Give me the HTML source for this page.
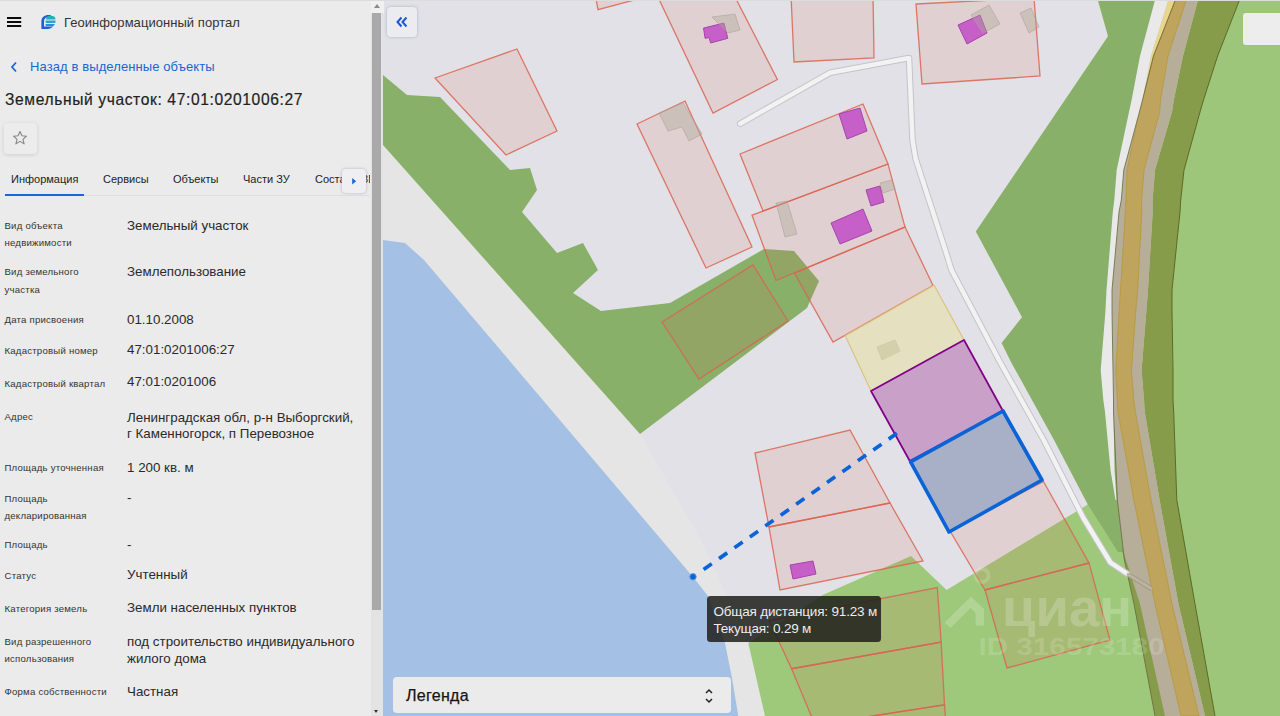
<!DOCTYPE html>
<html lang="ru"><head><meta charset="utf-8"><title>Геоинформационный портал</title>
<style>
*{box-sizing:border-box;margin:0;padding:0}
html,body{width:1280px;height:716px;overflow:hidden;background:#ebebeb;-webkit-font-smoothing:antialiased;font-family:"Liberation Sans",sans-serif;color:#2a2a2a}
.map{position:absolute;left:0;top:0}
.panel{position:absolute;left:0;top:0;width:370px;height:716px;background:#ebebeb;overflow:hidden}
.sb{position:absolute;left:370.5px;top:0;width:12.5px;height:716px;background:#e3e3e3}
.sb .th{position:absolute;left:1px;top:13px;width:9.5px;height:597px;background:#a9a9a9}
.sb .up{position:absolute;left:3px;top:4px;width:0;height:0;border:3px solid transparent;border-bottom:4px solid #8a8a8a;border-top:0}
.sb .dn{position:absolute;left:3.2px;top:710px;width:0;height:0;border:2.6px solid transparent;border-top:3.4px solid #333;border-bottom:0}
.topline{position:absolute;left:0;top:0;width:1280px;height:1px;background:#dcdcdc}
.abs{position:absolute;white-space:nowrap}
.row{position:absolute;left:0;width:370px}
.lb{position:absolute;left:4.5px;font-size:9.6px;letter-spacing:0.22px;line-height:16px;color:#333;white-space:nowrap}
.vl{position:absolute;left:127px;font-size:13.35px;line-height:17px;color:#2a2a2a;white-space:nowrap}
.tab{position:absolute;top:173px;font-size:11px;color:#222;white-space:nowrap}
.btn{position:absolute;background:#ececf0;border-radius:4px;box-shadow:0 0 3px rgba(120,130,170,.55)}
</style></head><body>
<svg class="map" width="1280" height="716" viewBox="0 0 1280 716">
<rect x="383" y="0" width="897" height="716" fill="#e1e1e7"/>
<polygon fill="#e5e5e6" points="383,140 640,434 701,540 749,643 770,716 383,716"/>
<polygon fill="#a4c0e4" points="383,240 405,243 424,260 693,577 708,596 725,643 732,678 738.3,716 383,716"/>
<polygon fill="#88b068" points="383,75 407,95 440,97 510,170 530,168 537,190 522,212 557,253 583,243 598,270 573,293 601,311 670,303 764,249 794,251 819,281 807,308 640,434 383,145"/>
<polygon fill="#9ec87a" points="765,716 748.3,643 822.7,595 911,556 946.6,590 1087,505 1100,480 1135,480 1140,620 1160,716"/>
<polygon fill="#88b068" points="1097.8,0 1108,36.3 975.8,231.5 1022,317.2 1001.6,343 1011,362 1054,440 1087,503 1118,552 1124,552 1130,500 1130,0"/>
<polygon fill="#88b068" points="1168.3,0 1151,56 1142.5,100 1139.4,112 1123.8,170 1121.3,200 1119,212 1112,290 1112,312 1113,370 1113.5,400 1113.5,412 1117.4,500 1112,500 1112,0"/>
<polygon fill="#9ec67a" points="1239.5,0 1217.6,56 1203.5,100 1200,112 1184,170 1180.7,200 1180,212 1172,290 1172,312 1173,370 1173,400 1173.7,412 1176.8,500 1195,604 1215,716 1280,716 1280,0"/>
<polygon fill="#b6ae98" points="1168.3,0 1151,56 1142.5,100 1139.4,112 1123.8,170 1121.3,200 1119,212 1112,290 1112,312 1113,370 1113.5,400 1113.5,412 1117.4,500 1124.4,560 1134,604 1155,716 1205,716 1178.5,604 1159.6,500 1144.8,412 1144,400 1141.6,370 1146.3,312 1148,290 1152.7,212 1152.6,200 1155,170 1172,112 1173.8,100 1183,56 1198,0"/>
<polygon fill="#ead68a" points="1168.3,0 1151,56 1142.5,100 1142.5,100 1153.5,56 1175.4,0"/>
<polygon fill="#bea45c" stroke="#b89838" stroke-width="0.8" points="1175.4,0 1153.5,56 1142.5,100 1139.4,112 1127,170 1126,200 1125.3,212 1120.5,290 1119,312 1115.8,370 1117.4,400 1118,412 1133.8,500 1155,604 1181,716 1199,716 1172,604 1151,500 1135.4,412 1133.8,400 1131.5,370 1135.7,312 1137.7,290 1141.8,212 1141.6,200 1144,170 1159.7,112 1160.5,100 1168,56 1186.3,0"/>
<polygon fill="#869c4a" points="1198,0 1183,56 1173.8,100 1172,112 1155,170 1152.6,200 1152.7,212 1148,290 1146.3,312 1141.6,370 1144,400 1144.8,412 1159.6,500 1178.5,604 1205,716 1215,716 1195,604 1176.8,500 1173.7,412 1173,400 1173,370 1172,312 1172,290 1180,212 1180.7,200 1184,170 1200,112 1203.5,100 1217.6,56 1239.5,0"/>
<polyline fill="none" stroke="#5a6a20" stroke-width="1" points="1239.5,0 1217.6,56 1203.5,100 1200,112 1184,170 1180.7,200 1180,212 1172,290 1172,312 1173,370 1173,400 1173.7,412 1176.8,500 1195,604 1215,716"/>
<polygon fill="#869c4a" points="1121,545 1134,604 1155,716 1165,716 1140,604 1126,560"/>
<polygon fill="#e9e9ea" points="1155,0 1140,56 1131.6,100 1129,112 1116.7,170 1114.3,200 1112.8,212 1106.5,290 1105.4,312 1100.7,370 1103.3,400 1105,412 1110.5,470 1115.5,500 1116.5,500 1114.5,470 1113.5,412 1113.5,400 1113,370 1112,312 1112,290 1119,212 1121.3,200 1123.8,170 1139.4,112 1142.5,100 1151,56 1168.3,0"/>
<polyline fill="none" stroke="#6a6a40" stroke-width="0.8" points="1175.4,0 1153.5,56 1142.5,100 1139.4,112 1123.8,170 1121.3,200 1119,212 1112,290 1112,312 1113,370 1113.5,400 1113.5,412 1117.4,500 1124.4,560 1134,604 1155,716"/>
<polyline fill="none" stroke="#c4c4c8" stroke-width="6.5" stroke-linejoin="round" stroke-linecap="round" points="740.2,123.7 830,72.8 909,58 912.5,140 915.6,158.8 945.3,250 951.6,270.3 1000,362 1043.7,440 1083.4,518 1110.4,562.5 1127.6,574"/>
<polyline fill="none" stroke="#f2f2f3" stroke-width="4.5" stroke-linejoin="round" stroke-linecap="round" points="740.2,123.7 830,72.8 909,58 912.5,140 915.6,158.8 945.3,250 951.6,270.3 1000,362 1043.7,440 1083.4,518 1110.4,562.5 1127.6,574"/>
<polyline fill="none" stroke="#9c9684" stroke-width="4.4" points="1128,574.3 1152,589"/>
<polyline fill="none" stroke="#bcb4a0" stroke-width="2.8" points="1127,573.7 1152,589"/>
<polygon fill="#dc6048" fill-opacity="0.135" stroke="#dc6450" stroke-opacity="0.85" stroke-width="1.3" points="435,78 517,49 557,131 506,155"/>
<polygon fill="#dc6048" fill-opacity="0.135" stroke="#dc6450" stroke-opacity="0.85" stroke-width="1.3" points="595.3,-5 598,9.7 638,-1"/>
<polygon fill="#dc6048" fill-opacity="0.135" stroke="#dc6450" stroke-opacity="0.85" stroke-width="1.3" points="657,-5 734,-5 777.4,79.5 713,113"/>
<polygon fill="#dc6048" fill-opacity="0.135" stroke="#dc6450" stroke-opacity="0.85" stroke-width="1.3" points="791,-5 794,62 874,58 873,-5"/>
<polygon fill="#dc6048" fill-opacity="0.135" stroke="#dc6450" stroke-opacity="0.85" stroke-width="1.3" points="637,124 685,101 752,247 706,268"/>
<polygon fill="#dc6048" fill-opacity="0.135" stroke="#dc6450" stroke-opacity="0.85" stroke-width="1.3" points="916,4 1034,-2 1040,76 922,84"/>
<polygon fill="#dc6048" fill-opacity="0.135" stroke="#dc6450" stroke-opacity="0.85" stroke-width="1.3" points="740,154 863,104 888,164 763,211"/>
<polygon fill="#dc6048" fill-opacity="0.135" stroke="#dc6450" stroke-opacity="0.85" stroke-width="1.3" points="752,215.2 888,164 905,227 776,280.5"/>
<polygon fill="#dc6048" fill-opacity="0.135" stroke="#dc6450" stroke-opacity="0.85" stroke-width="1.3" points="794.4,273.1 905,227 933,285.5 833,342"/>
<polygon fill="#dc6048" fill-opacity="0.135" stroke="#dc6450" stroke-opacity="0.85" stroke-width="1.3" points="755,453 850,430 890,503 769,527"/>
<polygon fill="#dc6048" fill-opacity="0.135" stroke="#dc6450" stroke-opacity="0.85" stroke-width="1.3" points="769,527 890,503 923,561 780,590"/>
<polygon fill="#dc6048" fill-opacity="0.135" stroke="#dc6450" stroke-opacity="0.85" stroke-width="1.3" points="950,531 1043.5,481.5 1089,563 985,590"/>
<polygon fill="#dc6048" fill-opacity="0.135" stroke="#dc6450" stroke-opacity="0.85" stroke-width="1.3" points="985,590 1089,563 1110,640 1007,668"/>
<polygon fill="#dc6048" fill-opacity="0.135" stroke="#dc6450" stroke-opacity="0.85" stroke-width="1.3" points="662,322 753,265 788,321 699,379"/>
<polygon fill="#dc6048" fill-opacity="0.135" stroke="#dc6450" stroke-opacity="0.85" stroke-width="1.3" points="769.2,620.6 937.3,587.5 941.1,642.1 791.6,668.75"/>
<polygon fill="#dc6048" fill-opacity="0.135" stroke="#dc6450" stroke-opacity="0.85" stroke-width="1.3" points="791.6,668.75 941.1,642.1 944.5,704.8 815,724.9"/>
<polygon fill="#dc6048" fill-opacity="0.135" stroke="#dc6450" stroke-opacity="0.85" stroke-width="1.3" points="815,724.9 944.5,704.8 947,740 820,740"/>
<polygon fill="#e4e0c0" stroke="#dcc47c" stroke-width="1.2" points="845.3,335.7 934.2,285.2 964,340 871,391"/>
<polygon fill="#d4d0ac" stroke="#cccaa8" stroke-width="0.8" points="877,347 895,340 900,351 882,360"/>
<polygon fill="#c452c6" fill-opacity="0.9" stroke="#a644ac" stroke-width="1" stroke-linejoin="round" points="703.5,28.1 723.9,23.1 727.8,38.3 710.6,43 709,37.5 705.1,38.3"/>
<polygon fill="#c452c6" fill-opacity="0.9" stroke="#a644ac" stroke-width="1" stroke-linejoin="round" points="958,25 980,15 987,33 967,44"/>
<polygon fill="#c452c6" fill-opacity="0.9" stroke="#a644ac" stroke-width="1" stroke-linejoin="round" points="839,114 860,108 867,131 847,139"/>
<polygon fill="#c452c6" fill-opacity="0.9" stroke="#a644ac" stroke-width="1" stroke-linejoin="round" points="866,190 880,186 884,202 871,206"/>
<polygon fill="#c452c6" fill-opacity="0.9" stroke="#a644ac" stroke-width="1" stroke-linejoin="round" points="831,223 863,209 872,231 840,244"/>
<polygon fill="#c452c6" fill-opacity="0.9" stroke="#a644ac" stroke-width="1" stroke-linejoin="round" points="790,565 813,561 816,574 793,579"/>
<polygon fill="#b0a898" fill-opacity="0.4" stroke="#a8a090" stroke-opacity="0.6" stroke-width="0.9" points="712,17 735,14 740,30 728,33"/>
<polygon fill="#b0a898" fill-opacity="0.4" stroke="#a8a090" stroke-opacity="0.6" stroke-width="0.9" points="971,15 989,5 1000,24 983,33"/>
<polygon fill="#b0a898" fill-opacity="0.4" stroke="#a8a090" stroke-opacity="0.6" stroke-width="0.9" points="1020,13 1031,8 1039,27 1029,33"/>
<polygon fill="#b0a898" fill-opacity="0.4" stroke="#a8a090" stroke-opacity="0.6" stroke-width="0.9" points="880,183 892,180 895,189 883,193"/>
<polygon fill="#b0a898" fill-opacity="0.4" stroke="#a8a090" stroke-opacity="0.6" stroke-width="0.9" points="776,203 787,201 797,234 785,237"/>
<polygon fill="#b0a898" fill-opacity="0.4" stroke="#a8a090" stroke-opacity="0.6" stroke-width="0.9" points="659,113 683,103 702,134 689,141 682,127 668,131"/>
<polygon fill="#c8a0c8" stroke="#800088" stroke-width="1.75" stroke-linejoin="round" points="871,391 964,340 1003,411 909.8,461"/>
<polygon fill="#a8b0c8" stroke="#0a64d8" stroke-width="3.6" stroke-linejoin="round" points="910.6,461.8 1003,411 1042,480 949,532"/>
<line x1="703.6" y1="569.5" x2="897" y2="433.3" stroke="#0a64d8" stroke-width="3.7" stroke-dasharray="10,8.87"/>
<circle cx="693" cy="576.8" r="3.2" fill="#0a64d8" stroke="#5a9ae8" stroke-width="1"/>
<g fill="#fff" fill-opacity="0.2">
<path d="M944.5,622.5 L971,596.5 L984,609 L984,625.5 L975.5,625.5 L975.5,613 L970.5,608 L950.5,628 Z"/>
<circle cx="982" cy="575.5" r="6.5" fill="none" stroke="#fff" stroke-opacity="0.16" stroke-width="4"/>
<text x="1002" y="626.3" font-family="Liberation Sans, sans-serif" font-weight="700" font-size="54.5" textLength="130" lengthAdjust="spacingAndGlyphs">циан</text>
<text x="978.5" y="654.5" fill-opacity="0.16" font-family="Liberation Sans, sans-serif" font-weight="700" font-size="23" textLength="186" lengthAdjust="spacingAndGlyphs">ID 316573180</text>
</g>
</svg>
<div class="panel">
 <svg class="abs" style="left:7px;top:15px" width="15" height="14" viewBox="0 0 15 14"><path d="M0,3h14.2M0,7h14.2M0,11h14.2" stroke="#0a0a0a" stroke-width="1.85"/></svg>
 <svg class="abs" style="left:40px;top:14px" width="17" height="16" viewBox="40 14 17 16"><path d="M41.4,28.9 L41.4,21.5 C41.4,17.2 44.4,14.9 48.5,14.9 L51,14.9 L50,17 L48.6,17 C45.8,17 44,18.6 44,21.6 L44,26.6 L49.5,26.6 C51,26.6 52.4,26.3 53.4,25.4 C52.3,27.7 50.2,28.9 47.5,28.9 Z" fill="#1c62c8"/><path d="M47.2,16.4 C49.5,15.6 52.5,15.6 54.6,16.8 C55.1,17.6 55.4,18.5 55.5,19.4 L46,19.4 C46.2,18.2 46.5,17 47.2,16.4Z" fill="#22b0b8"/><path d="M45.6,20.4 L55.6,20.4 C55.6,21.3 55.5,22.2 55.2,23 L45.6,23Z" fill="#2aa4d8"/><path d="M45.6,24 L54.8,24 C54.4,24.9 53.9,25.5 53.3,26 L45.6,26Z" fill="#2a8ee0"/></svg>
 <div class="abs" style="left:64px;top:14.8px;font-size:13px;letter-spacing:0.05px;color:#333">Геоинформационный портал</div>
 <svg class="abs" style="left:10px;top:60.5px" width="8" height="12" viewBox="0 0 8 12"><path d="M6,1.5 L2,6 L6,10.5" fill="none" stroke="#1a66d2" stroke-width="1.8"/></svg>
 <div class="abs" style="left:30px;top:58.5px;font-size:13px;letter-spacing:0.1px;color:#1a66d2">Назад в выделенные объекты</div>
 <div class="abs" style="left:5px;top:90.5px;font-size:15.6px;letter-spacing:0.62px;color:#222;-webkit-text-stroke:0.18px #222">Земельный участок: 47:01:0201006:27</div>
 <div class="btn" style="left:4.4px;top:122.5px;width:32.4px;height:31px;background:#ececec;box-shadow:0 1px 4px rgba(0,0,0,.13)"><svg width="32" height="31" viewBox="0 1 32 31"><path d="M16,9.5 l1.9,4.3 4.6,.4 -3.5,3.1 1.1,4.6 -4.1,-2.5 -4.1,2.5 1.1,-4.6 -3.5,-3.1 4.6,-.4z" fill="none" stroke="#858585" stroke-width="1.1" stroke-linejoin="round"/></svg></div>
 <div class="tab" style="left:11px">Информация</div>
 <div class="tab" style="left:103px">Сервисы</div>
 <div class="tab" style="left:173px">Объекты</div>
 <div class="tab" style="left:243px">Части ЗУ</div>
 <div class="tab" style="left:315px">Состав ЕЗП</div>
 <div class="abs" style="left:5px;top:195.3px;width:365px;height:1px;background:#dfdfdf"></div>
 <div class="abs" style="left:5px;top:194px;width:79px;height:2px;background:#1a66d2"></div>
 <div class="btn" style="left:342px;top:169.3px;width:24.3px;height:23.8px;background:#efeff2"><svg width="24" height="24" viewBox="0 1.3 24 24"><path d="M10.2,10.2 l3.9,3.3 -3.9,3.3z" fill="#1a66d2"/></svg></div>
 <div class="lb" style="top:217.7px">Вид объекта</div>
<div class="lb" style="top:235.1px">недвижимости</div>
<div class="vl" style="top:216.5px">Земельный участок</div>
<div class="lb" style="top:264.2px">Вид земельного</div>
<div class="lb" style="top:282.3px">участка</div>
<div class="vl" style="top:263.3px">Землепользование</div>
<div class="lb" style="top:312.1px">Дата присвоения</div>
<div class="vl" style="top:310.5px">01.10.2008</div>
<div class="lb" style="top:343.3px">Кадастровый номер</div>
<div class="vl" style="top:341.0px">47:01:0201006:27</div>
<div class="lb" style="top:376.0px">Кадастровый квартал</div>
<div class="vl" style="top:373.3px">47:01:0201006</div>
<div class="lb" style="top:409.3px">Адрес</div>
<div class="vl" style="top:408.5px">Ленинградская обл, р-н Выборгский,</div>
<div class="vl" style="top:425.2px">г Каменногорск, п Перевозное</div>
<div class="lb" style="top:459.8px">Площадь уточненная</div>
<div class="vl" style="top:458.5px">1 200 кв. м</div>
<div class="lb" style="top:490.6px">Площадь</div>
<div class="lb" style="top:507.7px">декларированная</div>
<div class="vl" style="top:489.3px">-</div>
<div class="lb" style="top:537.0px">Площадь</div>
<div class="vl" style="top:535.8px">-</div>
<div class="lb" style="top:567.8px">Статус</div>
<div class="vl" style="top:565.5px">Учтенный</div>
<div class="lb" style="top:600.5px">Категория земель</div>
<div class="vl" style="top:598.8px">Земли населенных пунктов</div>
<div class="lb" style="top:634.3px">Вид разрешенного</div>
<div class="lb" style="top:651.3px">использования</div>
<div class="vl" style="top:633.1px">под строительство индивидуального</div>
<div class="vl" style="top:649.8px">жилого дома</div>
<div class="lb" style="top:684.1px">Форма собственности</div>
<div class="vl" style="top:682.5px">Частная</div>
</div>
<div class="sb"><div style="position:absolute;left:0;top:0;width:13px;height:12.5px;background:#f0f0f0"></div><div class="up"></div><div class="th"></div><div class="dn"></div></div>
<div class="btn" style="left:387px;top:7px;width:30px;height:30px"><svg width="30" height="30" viewBox="0 0 30 30"><path d="M14.5,10.5 L10.5,15 L14.5,19.5 M19.5,10.5 L15.5,15 L19.5,19.5" fill="none" stroke="#1a5ad0" stroke-width="2"/></svg></div>
<div class="abs" style="left:1243px;top:13px;width:40px;height:32px;background:#ededee;border-radius:3px"></div>
<div class="abs" style="left:707.2px;top:596.1px;width:174.2px;height:46.4px;background:rgba(32,32,28,.86);border-radius:3.5px;color:#ececec;font-size:13.5px;letter-spacing:-0.18px;line-height:17.1px;padding:7.3px 6px 0 6.2px">Общая дистанция: 91.23 м<br>Текущая: 0.29 м</div>
<div class="abs" style="left:392.5px;top:677.1px;width:338.7px;height:35.9px;background:#ebebeb;border-radius:4px">
 <div class="abs" style="left:13.5px;top:10px;font-size:16px;letter-spacing:0.3px;color:#161616;-webkit-text-stroke:0.25px #161616">Легенда</div>
 <svg class="abs" style="left:311.7px;top:9.5px" width="10" height="18" viewBox="0 0 10 18"><path d="M2,6 L5,3 L8,6 M2,12 L5,15 L8,12" fill="none" stroke="#222" stroke-width="1.5"/></svg>
</div>
<div class="topline"></div>
</body></html>
